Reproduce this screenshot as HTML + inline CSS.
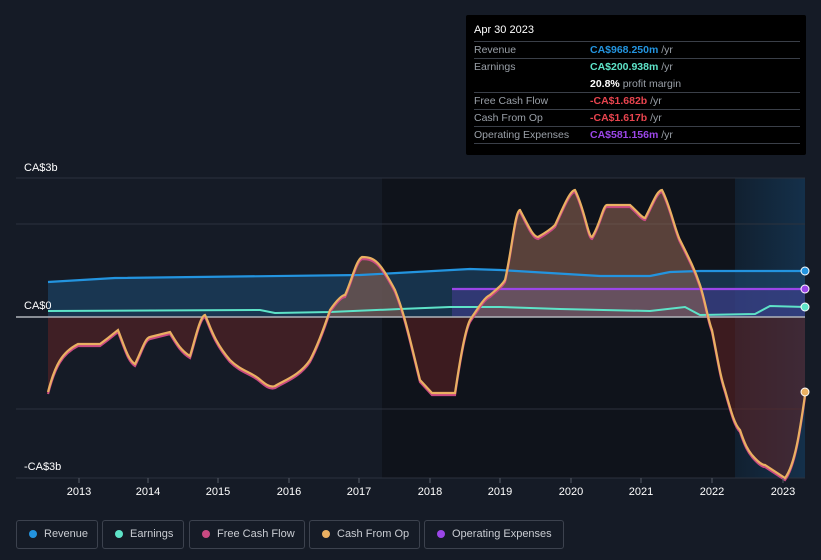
<!DOCTYPE html>
<html><head><meta charset="utf-8"><style>
body{margin:0;width:821px;height:560px;background:#151b26;font-family:"Liberation Sans",sans-serif;overflow:hidden;position:relative}
.tt{position:absolute;left:466px;top:15px;width:340px;height:140px;background:#000;border-radius:2px}
.tt .d{position:absolute;left:8px;top:9px;color:#fff;font-size:11px}
.row{position:absolute;left:8px;width:326px;border-top:1px solid #3a3f48;font-size:10.5px;color:#9aa0a8;height:17px}
.row span{position:absolute;left:116px;top:2px}
.row .l{left:0}
.leg{position:absolute;top:520px;height:29px;border:1px solid #3c424e;border-radius:3px;box-sizing:border-box;color:#c9ccd2;font-size:11px;line-height:27px}
.leg i{position:absolute;left:12px;top:9px;width:8px;height:8px;border-radius:50%}
.leg b{font-weight:normal;position:absolute;left:27px}
</style></head><body>
<div class="tt">
<div class="d">Apr 30 2023</div>
<div class="row" style="top:26px"><span class="l">Revenue</span><span><b style="color:#2394df">CA$968.250m</b> /yr</span></div>
<div class="row" style="top:43px;height:34px"><span class="l">Earnings</span><span><b style="color:#5ee3c8">CA$200.938m</b> /yr</span><span style="top:19px"><b style="color:#fff">20.8%</b> profit margin</span></div>
<div class="row" style="top:77px"><span class="l">Free Cash Flow</span><span><b style="color:#e8444e">-CA$1.682b</b> /yr</span></div>
<div class="row" style="top:94px"><span class="l">Cash From Op</span><span><b style="color:#e8444e">-CA$1.617b</b> /yr</span></div>
<div class="row" style="top:111px"><span class="l">Operating Expenses</span><span><b style="color:#9b46e8">CA$581.156m</b> /yr</span></div>
<div class="row" style="top:128px;height:0"></div>
</div>
<svg width="821" height="560" style="position:absolute;left:0;top:0">
<defs><linearGradient id="hl" x1="0" x2="1"><stop offset="0" stop-color="#112030"/><stop offset="1" stop-color="#14304a"/></linearGradient>
<clipPath id="up"><rect x="0" y="0" width="821" height="317"/></clipPath>
<clipPath id="dn"><rect x="0" y="317" width="821" height="243"/></clipPath>
<path id="cfo" d="M48,392 C55,365 62,352 78,344 L100,344 L108,338 L118,330 C124,345 128,360 135,364 C142,350 145,338 150,337 L170,332 C175,340 180,350 190,356 C195,340 200,316 205,315 C210,325 213,340 230,360 C240,370 250,372 258,378 C265,384 270,388 275,386 C285,380 300,375 310,360 C318,345 325,325 330,310 C337,300 342,295 345,295 C352,280 356,260 362,257 C375,257 380,262 395,290 C405,315 410,340 420,380 L432,393 L455,393 C460,360 465,330 470,320 C480,305 485,297 490,295 C498,288 502,285 505,280 C512,250 515,210 520,210 C528,225 533,237 538,237 C545,233 550,230 555,225 C562,210 570,190 575,190 C585,210 588,237 592,237 C600,225 603,205 607,205 L630,205 C638,212 642,218 645,218 C652,205 657,190 662,190 C670,205 675,230 680,240 C690,260 695,270 700,285 C705,300 708,320 712,330 C718,360 720,375 725,390 C732,415 735,425 740,430 C745,445 748,450 752,455 C758,462 762,465 765,465 L785,478 C795,465 800,430 805,395"/>
<path id="cfoF" d="M48,392 C55,365 62,352 78,344 L100,344 L108,338 L118,330 C124,345 128,360 135,364 C142,350 145,338 150,337 L170,332 C175,340 180,350 190,356 C195,340 200,316 205,315 C210,325 213,340 230,360 C240,370 250,372 258,378 C265,384 270,388 275,386 C285,380 300,375 310,360 C318,345 325,325 330,310 C337,300 342,295 345,295 C352,280 356,260 362,257 C375,257 380,262 395,290 C405,315 410,340 420,380 L432,393 L455,393 C460,360 465,330 470,320 C480,305 485,297 490,295 C498,288 502,285 505,280 C512,250 515,210 520,210 C528,225 533,237 538,237 C545,233 550,230 555,225 C562,210 570,190 575,190 C585,210 588,237 592,237 C600,225 603,205 607,205 L630,205 C638,212 642,218 645,218 C652,205 657,190 662,190 C670,205 675,230 680,240 C690,260 695,270 700,285 C705,300 708,320 712,330 C718,360 720,375 725,390 C732,415 735,425 740,430 C745,445 748,450 752,455 C758,462 762,465 765,465 L785,478 C795,465 800,430 805,395 L805,317 L48,317Z"/>
</defs>
<rect x="382" y="178" width="353" height="300" fill="#0f131b"/>
<rect x="735" y="178" width="70" height="300" fill="url(#hl)"/>
<g stroke="#2c323d" stroke-width="1"><line x1="16" y1="178" x2="805" y2="178"/><line x1="16" y1="224" x2="805" y2="224"/><line x1="16" y1="409" x2="805" y2="409"/><line x1="16" y1="478" x2="805" y2="478"/></g>
<path d="M48,282 L115,278 L360,275 L470,269 L500,270 L600,276 L650,276 L670,272 L700,271 L805,271 L805,317 L48,317Z" fill="#1d4a6e" opacity="0.6"/>
<path d="M452,289 L805,289 L805,317 L452,317Z" fill="#4a3d9a" opacity="0.5"/>
<g clip-path="url(#up)"><use href="#cfoF" fill="#8a6050" opacity="0.6"/></g>
<g clip-path="url(#dn)"><use href="#cfoF" fill="#6a2424" opacity="0.5"/></g>
<line x1="16" y1="317" x2="805" y2="317" stroke="#b0b4ba" stroke-width="1.5"/>
<path d="M48,282 L115,278 L360,275 L470,269 L500,270 L600,276 L650,276 L670,272 L700,271 L805,271" stroke="#2394df" stroke-width="2.2" fill="none"/>
<path d="M452,289 L805,289" stroke="#9b46e8" stroke-width="2.2" fill="none"/>
<path d="M48,311 L260,310 L275,313 L330,312 L400,309 L450,307 L500,307 L560,309 L650,311 L685,307 L700,315 L755,314 L770,306 L805,307" stroke="#5ee3c8" stroke-width="2" fill="none"/>
<use href="#cfo" stroke="#c94a82" stroke-width="2.2" fill="none" transform="translate(0,2)"/>
<use href="#cfo" stroke="#eab062" stroke-width="2.2" fill="none"/>
<circle cx="805" cy="271" r="4" fill="#2394df" stroke="#fff" stroke-width="1"/>
<circle cx="805" cy="289" r="4" fill="#9b46e8" stroke="#fff" stroke-width="1"/>
<circle cx="805" cy="307" r="4" fill="#5ee3c8" stroke="#fff" stroke-width="1"/>
<circle cx="805" cy="392" r="4" fill="#eab062" stroke="#fff" stroke-width="1"/>
<g stroke="#555b66"><line x1="79" y1="478" x2="79" y2="483"/><line x1="148" y1="478" x2="148" y2="483"/><line x1="218" y1="478" x2="218" y2="483"/><line x1="289" y1="478" x2="289" y2="483"/><line x1="359" y1="478" x2="359" y2="483"/><line x1="430" y1="478" x2="430" y2="483"/><line x1="500" y1="478" x2="500" y2="483"/><line x1="571" y1="478" x2="571" y2="483"/><line x1="641" y1="478" x2="641" y2="483"/><line x1="712" y1="478" x2="712" y2="483"/><line x1="783" y1="478" x2="783" y2="483"/></g>
<g fill="#fff" font-size="11" font-family="Liberation Sans,sans-serif" text-anchor="middle"><text x="79" y="495">2013</text><text x="148" y="495">2014</text><text x="218" y="495">2015</text><text x="289" y="495">2016</text><text x="359" y="495">2017</text><text x="430" y="495">2018</text><text x="500" y="495">2019</text><text x="571" y="495">2020</text><text x="641" y="495">2021</text><text x="712" y="495">2022</text><text x="783" y="495">2023</text></g>
<g fill="#fff" font-size="11" font-family="Liberation Sans,sans-serif"><text x="24" y="171">CA$3b</text><text x="24" y="309">CA$0</text><text x="24" y="470">-CA$3b</text></g>
</svg>
<div class="leg" style="left:16px;width:82px"><i style="background:#2394df"></i><b>Revenue</b></div>
<div class="leg" style="left:102px;width:82px"><i style="background:#5ee3c8"></i><b>Earnings</b></div>
<div class="leg" style="left:189px;width:116px"><i style="background:#c94a82"></i><b>Free Cash Flow</b></div>
<div class="leg" style="left:309px;width:111px"><i style="background:#eab062"></i><b>Cash From Op</b></div>
<div class="leg" style="left:424px;width:140px"><i style="background:#9b46e8"></i><b>Operating Expenses</b></div>
</body></html>
